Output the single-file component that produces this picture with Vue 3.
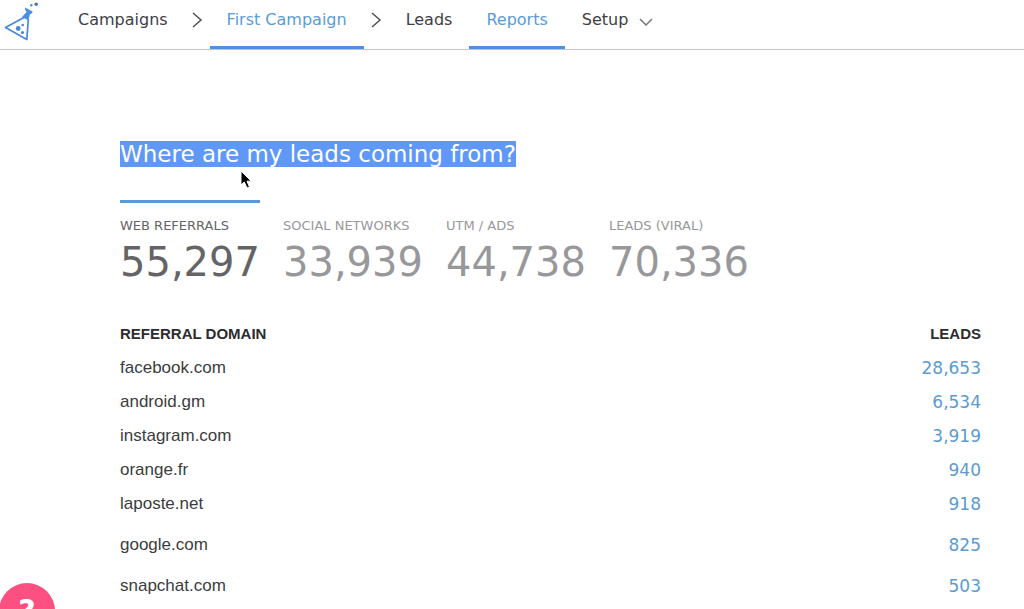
<script setup>
const metrics = [
  { label: 'WEB REFERRALS', value: '55,297', active: true },
  { label: 'SOCIAL NETWORKS', value: '33,939' },
  { label: 'UTM / ADS', value: '44,738' },
  { label: 'LEADS (VIRAL)', value: '70,336' },
]
const rows = [
  { domain: 'facebook.com', leads: '28,653' },
  { domain: 'android.gm', leads: '6,534' },
  { domain: 'instagram.com', leads: '3,919' },
  { domain: 'orange.fr', leads: '940' },
  { domain: 'laposte.net', leads: '918' },
  { domain: 'google.com', leads: '825', loose: true },
  { domain: 'snapchat.com', leads: '503', loose: true },
]
</script>

<template>
  <div class="page">
    <header class="topbar">
      <a class="logo" href="#" aria-label="Home">
        <svg width="40" height="44" viewBox="0 0 40 44">
          <path d="M24 17.5 L5.5 27.5 L26.8 39.5 L28.3 19.5" fill="none" stroke="#4a88d6" stroke-width="1.7" stroke-linejoin="round" />
          <path d="M25.3 7.5 L32.8 11.8 L31.2 14 L30 14 L28.5 20.5 L22 17 L26.5 12 L25 9.5 Z" fill="#4a8fe0" />
          <circle cx="18.2" cy="28.5" r="2.4" fill="#4a88d6" />
          <circle cx="22.7" cy="25" r="1.3" fill="#4a88d6" />
          <circle cx="22.5" cy="32.5" r="1.6" fill="#4a88d6" />
          <circle cx="31.3" cy="5.3" r="1.2" fill="#4a88d6" />
          <circle cx="36.2" cy="4.2" r="1.8" fill="#4a78b0" />
        </svg>
      </a>
      <nav class="nav">
        <a class="item" href="#">Campaigns</a>
        <svg class="sep" width="25" height="40" viewBox="0 0 25 40"><path d="M8 13 L16 20 L8 27" /></svg>
        <a class="item active" href="#">First Campaign</a>
        <svg class="sep" width="25" height="40" viewBox="0 0 25 40"><path d="M8 13 L16 20 L8 27" /></svg>
        <a class="item" href="#">Leads</a>
        <a class="item active" href="#">Reports</a>
        <button class="item" type="button">
          Setup
          <svg class="caret" width="14" height="8" viewBox="0 0 14 8"><path d="M1 1 L7 7 L13 1" /></svg>
        </button>
      </nav>
    </header>

    <main class="content">
      <h1 class="title"><span class="selected">Where are my leads coming from?</span>
        <svg class="pointer" width="14" height="20" viewBox="0 0 14 20"><path d="M1 1 V15 L4.3 12 L7 18 L9.5 17 L7 11.2 H11.3 Z" fill="#000" stroke="#fff" stroke-width="1" /></svg>
      </h1>

      <div class="metrics">
        <button v-for="m in metrics" :key="m.label" type="button" class="metric" :class="{ current: m.active }">
          <span class="label">{{ m.label }}</span>
          <span class="value">{{ m.value }}</span>
        </button>
      </div>

      <table class="referrals">
        <thead>
          <tr><th scope="col">REFERRAL DOMAIN</th><th scope="col">LEADS</th></tr>
        </thead>
        <tbody>
          <tr v-for="r in rows" :key="r.domain" :class="{ loose: r.loose }">
            <td>{{ r.domain }}</td>
            <td><a href="#">{{ r.leads }}</a></td>
          </tr>
        </tbody>
      </table>
    </main>

    <button class="help" type="button" aria-label="Help">?</button>
  </div>
</template>

<style>
body {
  margin: 0;
  background: #fff;
}
</style>

<style scoped>
.page {
  position: relative;
  height: 100vh;
  overflow: hidden;
  font-family: Verdana, "DejaVu Sans", sans-serif;
  color: #3c3c40;
}
a {
  text-decoration: none;
}
button {
  border: 0;
  background: none;
  font-family: inherit;
  text-align: left;
  cursor: pointer;
}
.topbar {
  display: flex;
  height: 49px;
  border-bottom: 1px solid #c4c4c6;
}
.logo {
  width: 61px;
}
.logo svg {
  display: block;
}
.nav {
  display: flex;
}
.item {
  box-sizing: border-box;
  height: 49px;
  padding: 0 17px;
  border-bottom: 3px solid transparent;
  font-size: 16px;
  line-height: 40px;
  color: #404044;
  white-space: nowrap;
}
button.item {
  display: flex;
  gap: 11px;
}
.item.active {
  color: #5b9bd8;
  border-bottom-color: #5190e0;
}
.sep path,
.caret path {
  fill: none;
  stroke: #505054;
  stroke-width: 1.5;
}
.caret {
  margin-top: 18px;
}
.caret path {
  stroke: #77777b;
}
.content {
  padding: 91px 43px 0 120px;
}
.title {
  position: relative;
  margin: 0;
  font-size: 23px;
  font-weight: 400;
  line-height: 26px;
}
.selected {
  display: inline-block;
  background: #5f98f7;
  color: #fff;
}
.pointer {
  position: absolute;
  left: 120px;
  top: 29px;
}
.metrics {
  display: flex;
  gap: 23px;
  margin-top: 33px;
}
.metric {
  width: 140px;
  padding: 16px 0 0;
  border-top: 3px solid transparent;
  color: #98989a;
}
.metric.current {
  border-top-color: #5b9ad8;
  color: #646466;
}
.label,
.value {
  display: block;
  white-space: nowrap;
}
.label {
  font-size: 13px;
  line-height: 14px;
}
.value {
  font-size: 40px;
  line-height: 48px;
  margin-top: 5px;
}
.referrals {
  width: 100%;
  margin-top: 31px;
  border-collapse: collapse;
}
.referrals th,
.referrals td {
  padding: 7px 0;
  font-family: "Liberation Sans", Arial, sans-serif;
  line-height: 20px;
  text-align: left;
}
.referrals th {
  font-size: 15px;
  color: #2c2c30;
}
.referrals td {
  font-size: 17px;
}
.referrals .loose td {
  padding-top: 14px;
}
.referrals th:last-child,
.referrals td:last-child {
  text-align: right;
}
.referrals td:last-child {
  font-family: Verdana, "DejaVu Sans", sans-serif;
}
.referrals a {
  color: #5b9bd0;
}
.help {
  position: absolute;
  left: -1px;
  bottom: -30px;
  width: 56px;
  height: 56px;
  padding: 0;
  border-radius: 50%;
  background: #fc4f82;
  color: #fff;
  font-size: 30px;
  font-weight: 700;
  line-height: 56px;
  text-align: center;
}
</style>
